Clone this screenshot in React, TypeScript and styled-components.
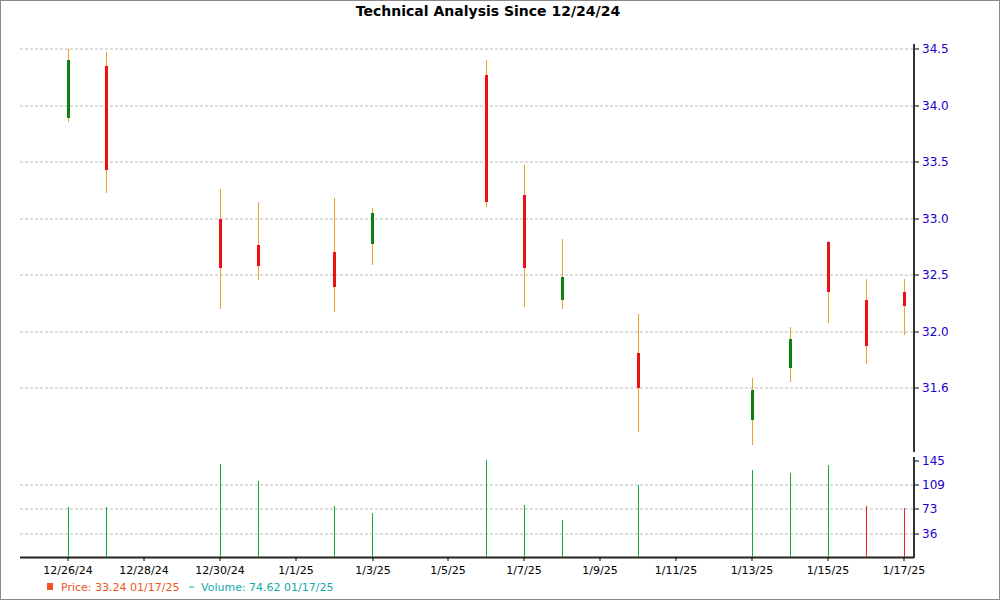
import React from "react";
import styled, { createGlobalStyle } from "styled-components";

const Global = createGlobalStyle`
  html, body { margin: 0; padding: 0; background: #fff; }
  body { font-family: "DejaVu Sans", Tahoma, sans-serif; }
`;

const Frame = styled.div`
  width: 1000px;
  height: 600px;
  box-sizing: border-box;
  border: 1px solid #8a8a8a;
  position: relative;
  background: #fff;
`;

const Chart = styled.svg`
  display: block;
  font-family: "DejaVu Sans", Tahoma, sans-serif;
`;

type C = { x: number; wt: number; wb: number; bt: number; bb: number; up: boolean; v: number; vr?: boolean };
const candles: C[] = [
  { x: 68, wt: 49, wb: 122, bt: 60, bb: 118, up: true, v: 507 },
  { x: 106, wt: 52, wb: 193, bt: 66, bb: 170, up: false, v: 507 },
  { x: 220, wt: 189, wb: 309, bt: 219, bb: 268, up: false, v: 464 },
  { x: 258, wt: 202, wb: 280, bt: 245, bb: 266, up: false, v: 481 },
  { x: 334, wt: 198, wb: 312, bt: 252, bb: 287, up: false, v: 506 },
  { x: 372, wt: 208, wb: 265, bt: 213, bb: 244, up: true, v: 513 },
  { x: 486, wt: 60, wb: 207, bt: 75, bb: 202, up: false, v: 460 },
  { x: 524, wt: 165, wb: 307, bt: 195, bb: 268, up: false, v: 505 },
  { x: 562, wt: 239, wb: 309, bt: 277, bb: 300, up: true, v: 520 },
  { x: 638, wt: 314, wb: 432, bt: 353, bb: 388, up: false, v: 485 },
  { x: 752, wt: 378, wb: 445, bt: 390, bb: 420, up: true, v: 470 },
  { x: 790, wt: 327, wb: 382, bt: 339, bb: 368, up: true, v: 473 },
  { x: 828, wt: 241, wb: 323, bt: 242, bb: 292, up: false, v: 465 },
  { x: 866, wt: 279, wb: 364, bt: 300, bb: 346, up: false, v: 506, vr: true },
  { x: 904, wt: 279, wb: 335, bt: 292, bb: 306, up: false, v: 508, vr: true },
];
const priceTicks: [number, string][] = [
  [49, "34.5"], [106, "34.0"], [162, "33.5"], [219, "33.0"], [275, "32.5"], [332, "32.0"], [388, "31.6"],
];
const volTicks: [number, string][] = [[461, "145"], [485, "109"], [509, "73"], [534, "36"]];
const dates: [number, string][] = [
  [68, "12/26/24"], [144, "12/28/24"], [220, "12/30/24"], [296, "1/1/25"], [373, "1/3/25"], [448, "1/5/25"],
  [524, "1/7/25"], [600, "1/9/25"], [676, "1/11/25"], [752, "1/13/25"], [828, "1/15/25"], [904, "1/17/25"],
];

export default function App() {
  return (
    <>
      <Global />
      <Frame>
        <Chart width={998} height={598} viewBox="1 1 998 598">
          <text x={488} y={16} textAnchor="middle" fontSize={14} fontWeight="bold" fill="#000">
            Technical Analysis Since 12/24/24
          </text>
          {priceTicks.map(([y, l]) => (
            <g key={l}>
              <line x1={20} x2={913} y1={y} y2={y} stroke="#bbb" strokeDasharray="3 2" />
              <line x1={914} x2={919} y1={y} y2={y} stroke="#000" />
              <text x={922} y={y + 4} fontSize={12} fill="#2200cc">{l}</text>
            </g>
          ))}
          {volTicks.map(([y, l]) => (
            <g key={l}>
              {y > 470 && <line x1={20} x2={913} y1={y} y2={y} stroke="#bbb" strokeDasharray="3 2" />}
              <line x1={914} x2={919} y1={y} y2={y} stroke="#000" />
              <text x={922} y={y + 4} fontSize={12} fill="#2200cc">{l}</text>
            </g>
          ))}
          <line x1={914} x2={914} y1={44} y2={452} stroke="#333" strokeWidth={2} />
          <line x1={914} x2={914} y1={457} y2={558} stroke="#333" strokeWidth={2} />
          <line x1={20} x2={914} y1={557.5} y2={557.5} stroke="#222" strokeWidth={2} />
          {dates.map(([x, l]) => (
            <g key={l}>
              <line x1={x} x2={x} y1={557} y2={561} stroke="#000" />
              <text x={x} y={574} textAnchor="middle" fontSize={11} fill="#000">{l}</text>
            </g>
          ))}
          {candles.map((c) => (
            <g key={c.x}>
              <line x1={c.x + 0.5} x2={c.x + 0.5} y1={c.wt} y2={c.wb} stroke="#f0a030" />
              <rect x={c.x - 1} y={c.bt} width={3} height={c.bb - c.bt} fill={c.up ? "#108010" : "#ee1111"} />
              <line x1={c.x + 0.5} x2={c.x + 0.5} y1={c.v} y2={557} stroke={c.vr ? "#ee2222" : "#11aa33"} />
            </g>
          ))}
          <rect x={47} y={583} width={6} height={7} fill="#ee5522" />
          <text x={61} y={591} fontSize={11} fill="#ee5522">Price: 33.24  01/17/25</text>
          <line x1={189} x2={194} y1={587} y2={587} stroke="#11aaaa" />
          <text x={201} y={591} fontSize={11} fill="#11aaaa">Volume: 74.62  01/17/25</text>
        </Chart>
      </Frame>
    </>
  );
}
